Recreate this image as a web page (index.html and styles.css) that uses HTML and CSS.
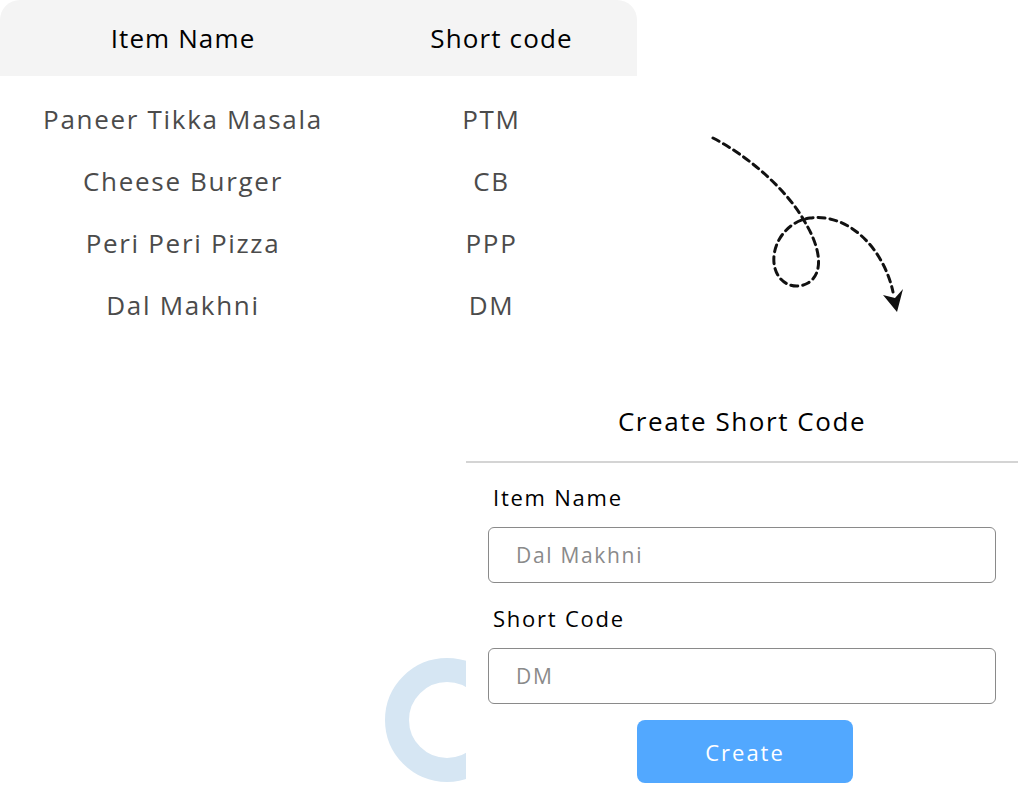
FILE: index.html
```html
<!DOCTYPE html>
<html lang="en">
<head>
    <meta charset="UTF-8">
    <meta name="viewport" content="width=device-width, initial-scale=1.0">
    <title>Short Codes</title>
    <link rel="stylesheet" href="styles.css">
</head>
<body>
    <div class="page">
        <!-- Item list -->
        <div class="codes-table">
            <div class="table-head">
                <span>Item Name</span>
                <span>Short code</span>
            </div>
            <div class="table-body">
                <div class="table-row"><span>Paneer Tikka Masala</span><span>PTM</span></div>
                <div class="table-row"><span>Cheese Burger</span><span>CB</span></div>
                <div class="table-row"><span>Peri Peri Pizza</span><span>PPP</span></div>
                <div class="table-row"><span>Dal Makhni</span><span>DM</span></div>
            </div>
        </div>

        <!-- Decorations -->
        <svg class="arrow" width="230" height="200" viewBox="0 0 230 200">
            <path d="M23,18 C58,36 98,70 116,104 C128,124 136,152 118,163 C104,171 86,163 84,143 C82,122 98,101 120,98 C160,93 194,130 203,172"
                  fill="none" stroke="#111" stroke-width="3" stroke-dasharray="7 5" stroke-linecap="round"/>
            <polygon points="193,175 205,178 213,169 207,192" fill="#111"/>
        </svg>
        <svg class="ring" width="130" height="130" viewBox="0 0 130 130">
            <circle cx="65" cy="65" r="50" fill="none" stroke="#d6e6f3" stroke-width="24"/>
        </svg>

        <!-- Create form -->
        <div class="create-panel">
            <h2>Create Short Code</h2>
            <div class="panel-body">
                <label for="item-name">Item Name</label>
                <input type="text" id="item-name" placeholder="Dal Makhni">
                <label for="short-code">Short Code</label>
                <input type="text" id="short-code" placeholder="DM">
                <button id="create-btn">Create</button>
            </div>
        </div>
    </div>
</body>
</html>
```

FILE: styles.css
```css
body {
    margin: 0;
    font-family: 'Open Sans', 'DejaVu Sans', sans-serif;
    letter-spacing: 0.07em;
    background-color: #fff;
    color: #000;
}
.page {
    position: relative;
    width: 1024px;
    height: 801px;
    overflow: hidden;
}
.codes-table {
    width: 637px;
}
.table-head {
    display: grid;
    grid-template-columns: 366px 1fr;
    align-items: center;
    height: 76px;
    background-color: #f4f4f4;
    border-radius: 20px 20px 0 0;
    font-size: 26px;
    font-weight: 500;
    text-align: center;
}
.table-body {
    padding-top: 12px;
}
.table-row {
    display: grid;
    grid-template-columns: 366px 251px;
    align-items: center;
    height: 62px;
    font-size: 26px;
    letter-spacing: 0.065em;
    color: #4b4b4b;
    text-align: center;
}
.arrow {
    position: absolute;
    left: 690px;
    top: 120px;
}
.ring {
    position: absolute;
    left: 382px;
    top: 655px;
}
.create-panel {
    position: relative;
    margin: 54px 0 0 466px;
    width: 552px;
    background-color: #fff;
}
.create-panel h2 {
    margin: 0;
    padding: 15px 0 24px;
    font-size: 26px;
    line-height: 32px;
    font-weight: 500;
    letter-spacing: 0.06em;
    text-align: center;
    border-bottom: 2px solid #d4d4d4;
}
.panel-body {
    display: flex;
    flex-direction: column;
    padding: 20px 22px 0;
}
.panel-body label {
    padding-left: 5px;
    font-size: 22px;
    line-height: 28px;
    letter-spacing: 0.08em;
    margin-bottom: 16px;
}
.panel-body input {
    box-sizing: border-box;
    height: 56px;
    padding: 0 27px;
    margin-bottom: 21px;
    border: 1px solid #8a8a8a;
    border-radius: 6px;
    font-family: inherit;
    font-size: 21px;
    letter-spacing: 0.08em;
}
.panel-body input::placeholder {
    color: #8a8a8a;
}
.panel-body input + label + input {
    margin-bottom: 16px;
}
button {
    align-self: center;
    width: 216px;
    height: 63px;
    margin-left: 6px;
    border: none;
    border-radius: 8px;
    background-color: #52a8ff;
    color: #fff;
    font-family: inherit;
    font-size: 22px;
    letter-spacing: 0.09em;
    cursor: pointer;
}
```
